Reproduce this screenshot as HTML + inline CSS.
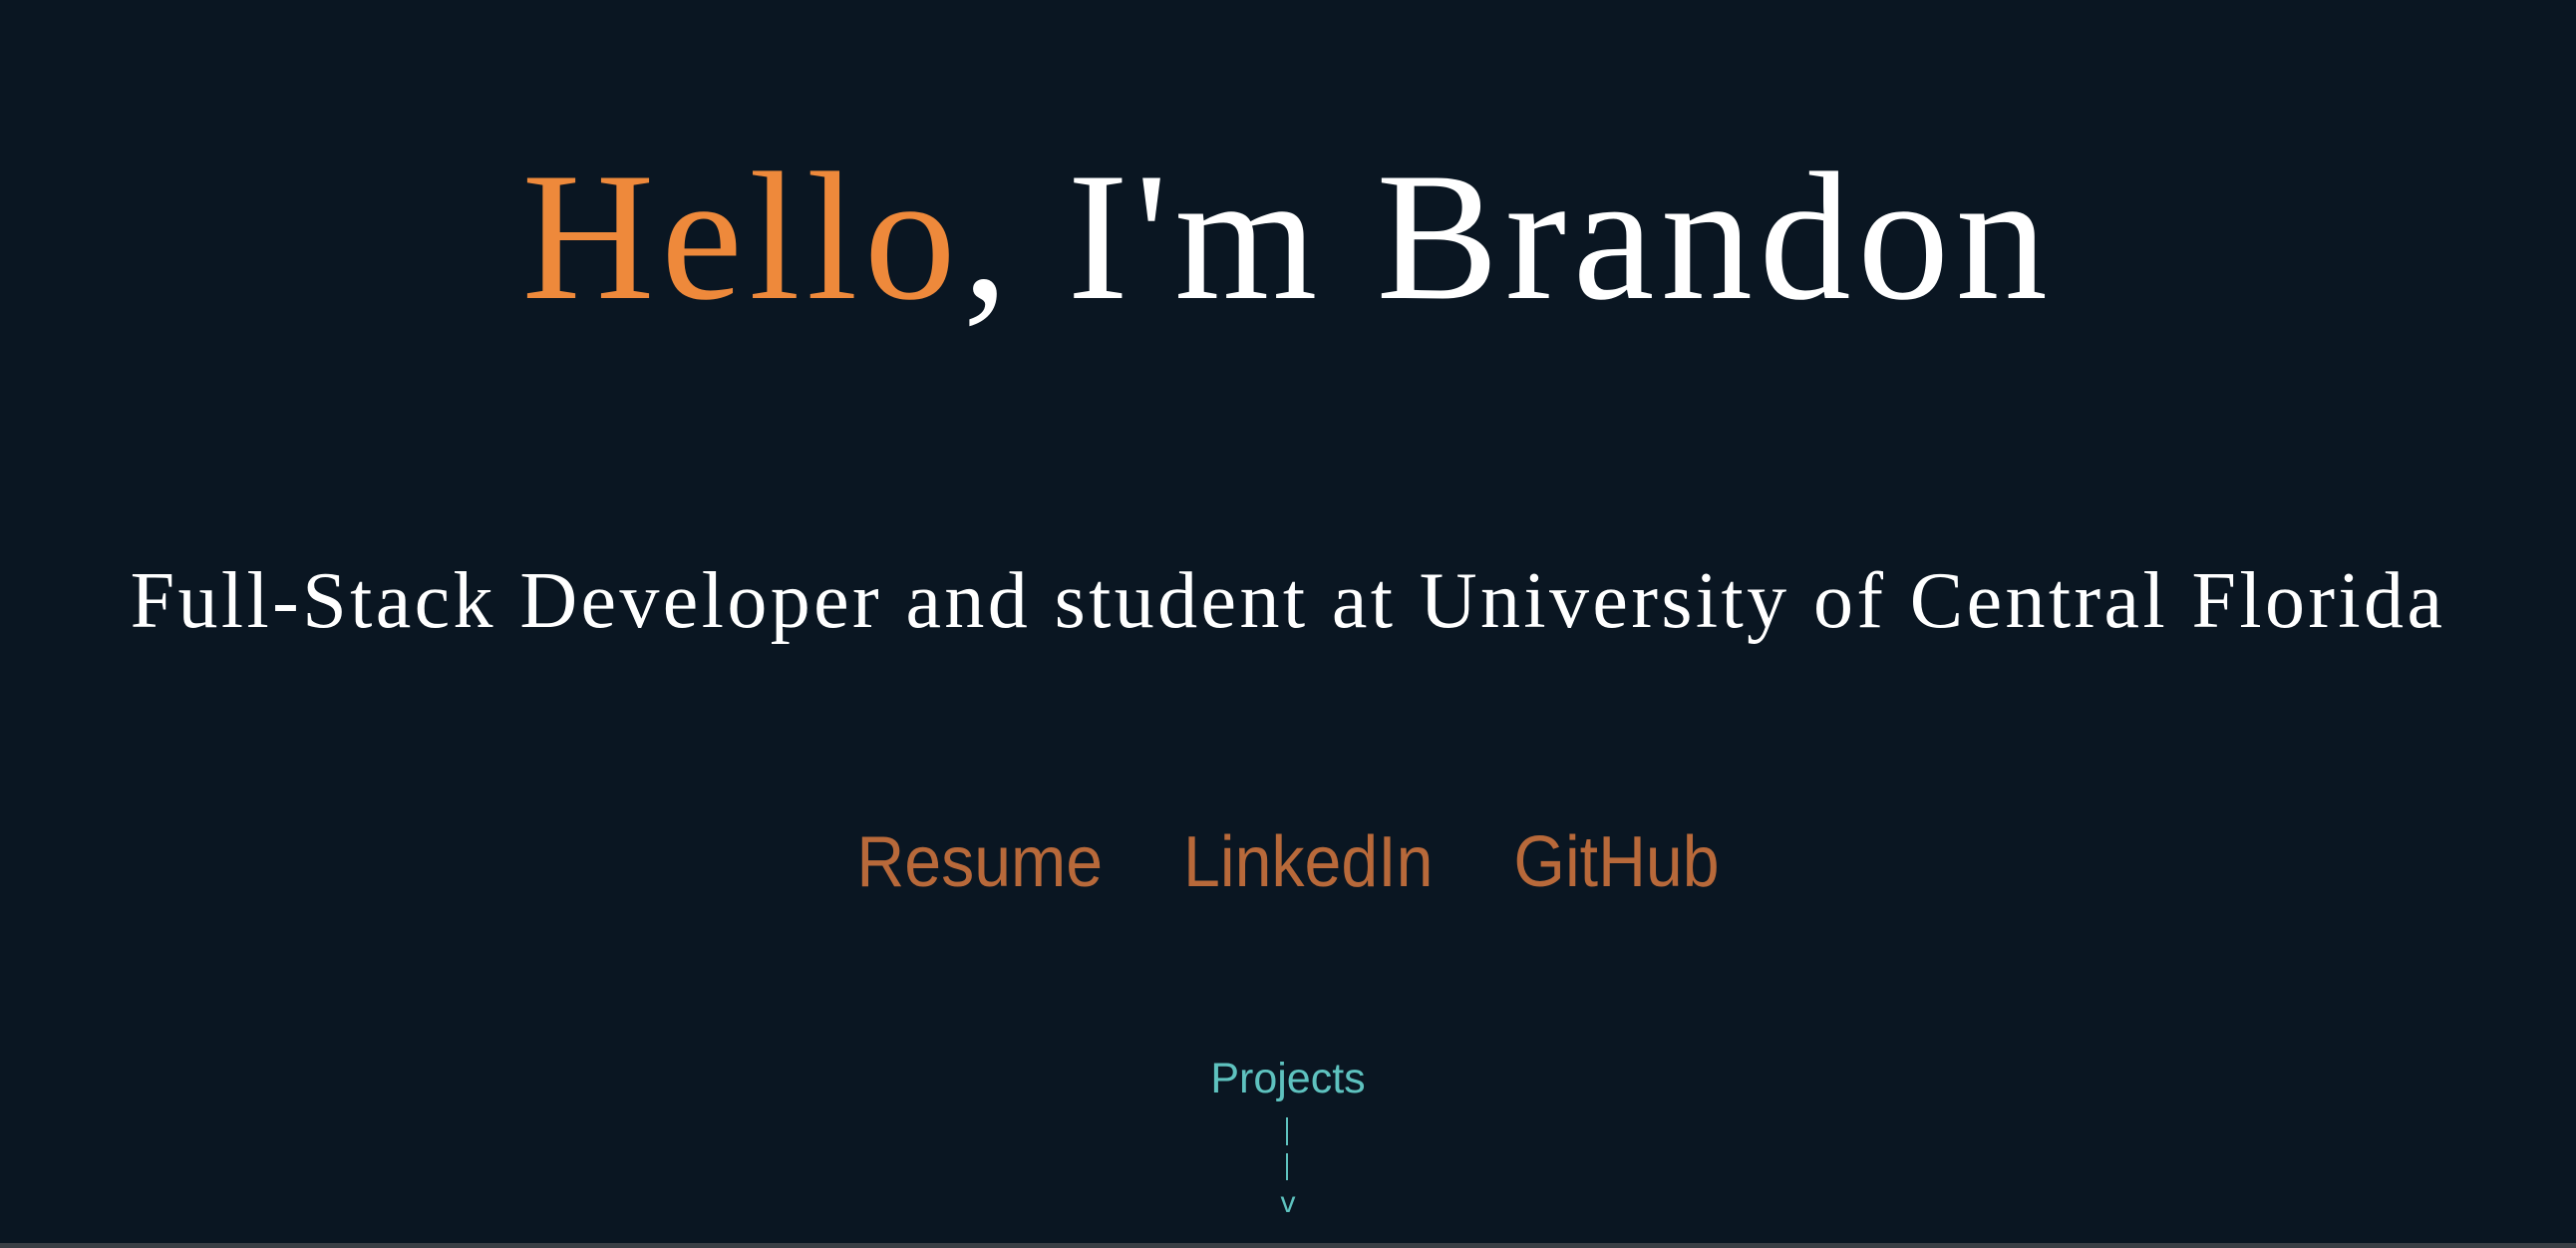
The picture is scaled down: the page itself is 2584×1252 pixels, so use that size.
<!DOCTYPE html>
<html><head><meta charset="utf-8"><style>
html,body{margin:0;padding:0;}
body{width:2584px;height:1252px;background:#0a1622;position:relative;overflow:hidden;}
.c{position:absolute;left:0;width:2584px;text-align:center;line-height:1;white-space:nowrap;}
h1{font-family:"Liberation Serif",serif;font-weight:normal;font-size:184px;color:#fff;margin:0;top:145px;letter-spacing:6.6px;}
h1 span{color:#ee893b;}
.sub{font-family:"Liberation Serif",serif;font-size:80px;color:#fff;top:563px;letter-spacing:3.4px;}
.links{font-family:"Liberation Sans",sans-serif;font-size:72px;color:#b8693a;top:829px;transform:scaleX(.92);}
.links span{margin:0 44px;}
.proj{font-family:"Liberation Sans",sans-serif;font-size:43px;color:#5ec2bf;top:1061px;}
.bar{position:absolute;left:1290px;width:2px;background:#5ec2bf;}
.v{font-family:"Liberation Sans",sans-serif;font-size:30px;color:#5ec2bf;top:1192px;}
.bl{position:absolute;left:0;top:1247px;width:2584px;height:5px;background:#3a3f45;}
</style></head><body>
<h1 class="c"><span>Hello</span>, I'm Brandon</h1>
<div class="c sub">Full-Stack Developer and student at University of Central Florida</div>
<div class="c links"><span>Resume</span><span>LinkedIn</span><span>GitHub</span></div>
<div class="c proj">Projects</div>
<div class="bar" style="top:1121px;height:28px"></div>
<div class="bar" style="top:1157px;height:27px"></div>
<div class="c v">v</div>
<div class="bl"></div>
</body></html>
